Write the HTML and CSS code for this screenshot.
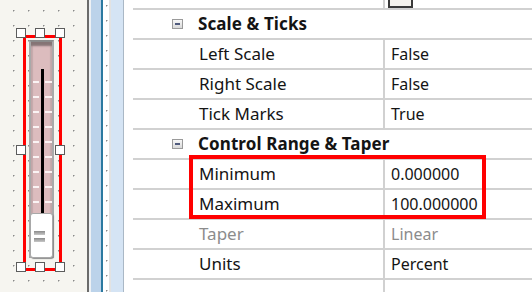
FILE: index.html
```html
<!DOCTYPE html>
<html lang="en">
<head>
    <meta charset="UTF-8">
    <title>Slider Properties</title>
    <link rel="stylesheet" href="styles.css">
</head>
<body>
    <div class="screen">
        <div class="canvas">
            <div class="widget">
                <div class="slider">
                    <div class="track"></div>
                    <div class="ticks">
                        <span></span><span></span><span></span><span></span><span></span>
                        <span></span><span></span><span></span><span></span>
                    </div>
                    <div class="thumb">
                        <span class="grip"></span>
                        <span class="grip"></span>
                    </div>
                </div>
            </div>
            <span class="handle h-tl"></span>
            <span class="handle h-tc"></span>
            <span class="handle h-tr"></span>
            <span class="handle h-ml"></span>
            <span class="handle h-mr"></span>
            <span class="handle h-bl"></span>
            <span class="handle h-bc"></span>
            <span class="handle h-br"></span>
        </div>

        <div class="splitter">
            <div class="strip-gap"></div>
            <div class="strip-blue"></div>
            <div class="strip-edge"></div>
            <div class="strip-dots"></div>
            <div class="strip-sep"></div>
            <div class="strip-cat"></div>
        </div>

        <div class="props">
            <div class="row top">
                <div class="name"></div>
                <div class="value"><span class="swatch"></span></div>
            </div>
            <div class="row cat">
                <span class="toggle"></span>Scale &amp; Ticks
            </div>
            <div class="row">
                <div class="name">Left Scale</div>
                <div class="value">False</div>
            </div>
            <div class="row">
                <div class="name">Right Scale</div>
                <div class="value">False</div>
            </div>
            <div class="row">
                <div class="name">Tick Marks</div>
                <div class="value">True</div>
            </div>
            <div class="row cat">
                <span class="toggle"></span>Control Range &amp; Taper
            </div>
            <div class="row">
                <div class="name">Minimum</div>
                <div class="value">0.000000</div>
            </div>
            <div class="row">
                <div class="name">Maximum</div>
                <div class="value">100.000000</div>
            </div>
            <div class="row disabled">
                <div class="name">Taper</div>
                <div class="value">Linear</div>
            </div>
            <div class="row">
                <div class="name">Units</div>
                <div class="value">Percent</div>
            </div>
            <div class="row last">
                <div class="name"></div>
                <div class="value"></div>
            </div>

            <div class="highlight"></div>
        </div>
    </div>
</body>
</html>
```

FILE: styles.css
```css
html, body {
    margin: 0;
    padding: 0;
    overflow: hidden;
}
body {
    font-family: "Noto Sans", "Open Sans", sans-serif;
    font-size: 16px;
    color: #141414;
    background: #ffffff;
}
.screen {
    display: flex;
    width: 532px;
    height: 292px;
}

/* design canvas with the selected slider */
.canvas {
    position: relative;
    width: 87px;
    height: 292px;
    flex: none;
    border-right: 2px solid #6b6b6b;
    background-color: #f6f5f0;
    background-image: radial-gradient(circle at 0.5px 0.5px, #8a8a8a 0.9px, transparent 1.1px);
    background-size: 15px 15px;
    background-position: 13px 10px;
}
.widget {
    position: absolute;
    left: 23px;
    top: 35px;
    width: 29px;
    height: 224px;
    border: 3px solid #ff0000;
    padding: 2px 2px 4px 2px;
    box-sizing: content-box;
}
.slider {
    position: relative;
    height: 218px;
    width: 25px;
    box-sizing: border-box;
    margin-left: 1px;
    background: #dcbcbe;
    border: 2px solid #a9a9a9;
    border-top-color: #8a8a8a;
    box-shadow: inset 0 5px 2px -1px #857475, inset 2px 0 1px #c4a9ab, inset -2px 0 1px #c4a9ab;
}
.track {
    position: absolute;
    left: 10px;
    top: 27px;
    width: 3px;
    height: 150px;
    background: #000000;
}
.ticks {
    position: absolute;
    left: 2px;
    top: 39px;
    width: 17px;
    display: flex;
    flex-direction: column;
    gap: 13px;
}
.ticks span {
    display: block;
    height: 2px;
    width: 19px;
    background: linear-gradient(to right, #fbf4f4 0 6px, transparent 6px 12px, #fbf4f4 12px 19px);
}
.thumb {
    position: absolute;
    left: -1px;
    top: 171px;
    width: 23px;
    height: 45px;
    box-sizing: border-box;
    background: #ffffff;
    border: 1px solid #a8a8a8;
    border-radius: 3px;
    box-shadow: 1px 1px 1px #8c8c8c;
    display: flex;
    flex-direction: column;
    align-items: center;
    padding-top: 17px;
    gap: 3px;
}
.grip {
    display: block;
    width: 11px;
    height: 4px;
    margin-right: 4px;
    background: linear-gradient(to bottom, #8a8a8a, #c8c8c8);
}
.handle {
    position: absolute;
    width: 10px;
    height: 10px;
    box-sizing: border-box;
    background: #ffffff;
    border: 1px solid #5c5c5c;
}
.h-tl { left: 16px; top: 28px; }
.h-tc { left: 35px; top: 28px; }
.h-tr { left: 55px; top: 28px; }
.h-ml { left: 16px; top: 145px; }
.h-mr { left: 55px; top: 145px; }
.h-bl { left: 16px; top: 262px; }
.h-bc { left: 35px; top: 262px; }
.h-br { left: 55px; top: 262px; }

/* strips between canvas and property grid */
.splitter {
    display: flex;
    flex: none;
}
.strip-gap { width: 2px; background: #eef1f4; }
.strip-blue { width: 10px; background: #bcd3ea; }
.strip-edge { width: 2px; background: #2b79a0; }
.strip-dots {
    width: 6px;
    background-color: #ffffff;
    background-image: radial-gradient(circle at 0.5px 0.5px, #8a8a8a 0.9px, transparent 1.1px);
    background-size: 15px 15px;
    background-position: 3px 5px;
    background-repeat: repeat-y;
}
.strip-sep { width: 2px; background: #e2e2e2; }
.strip-cat { width: 12px; background: #d5e4f4; border-right: 1px solid #aab8c6; }

/* property grid */
.props {
    position: relative;
    flex: 1;
    background: #ffffff;
}
.row {
    display: grid;
    grid-template-columns: 250px 1fr;
    height: 30px;
    box-sizing: border-box;
    margin-left: 9px;
    border-bottom: 2px solid #d1d1d1;
    line-height: 28px;
}
.row.top { height: 10px; }
.row.last { border-bottom: none; height: 14px; }
.name {
    padding-left: 66px;
    font-size: 17px;
    white-space: nowrap;
}
.value {
    padding-left: 6px;
    border-left: 2px solid #d1d1d1;
    white-space: nowrap;
}
.swatch {
    display: block;
    width: 21px;
    height: 6px;
    margin-left: -3px;
    background: #f5f3ee;
    border: 2px solid #3a3a3a;
    border-top: none;
}
.row.cat {
    display: flex;
    align-items: center;
    font-size: 17px;
    font-weight: bold;
    letter-spacing: 0.1px;
}
.toggle {
    position: relative;
    width: 11px;
    height: 10px;
    box-sizing: border-box;
    margin-left: 39px;
    margin-right: 15px;
    border: 1px solid #9a9a9a;
    background: linear-gradient(to bottom, #f7f7f7, #d9d9d9);
}
.toggle::after {
    content: "";
    position: absolute;
    left: 2px;
    top: 3px;
    width: 5px;
    height: 2px;
    background: #4f5a7c;
}
.row.disabled { color: #8c8c8c; }

.highlight {
    position: absolute;
    left: 65px;
    top: 155px;
    width: 297px;
    height: 64px;
    box-sizing: border-box;
    border: 4px solid #ff0000;
}
```
